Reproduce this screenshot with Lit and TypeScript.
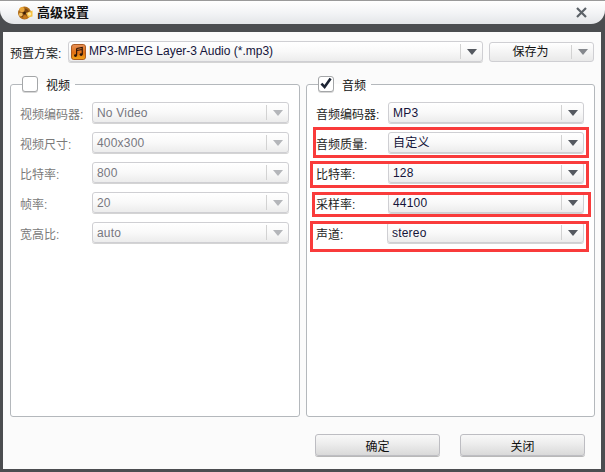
import { LitElement, html, css, svg } from "lit";
import { customElement } from "lit/decorators.js";

const reel = svg`<svg class="logo" width="16" height="16" viewBox="0 0 16 16">
  <circle cx="7.5" cy="8" r="6.5" fill="#b06c18"/>
  <circle cx="7.5" cy="8" r="4.6" fill="#7c4612"/>
  <circle cx="5" cy="4.6" r="2.6" fill="#eaa83c"/>
  <circle cx="3.8" cy="9.4" r="1.9" fill="#f0bc5c"/>
  <circle cx="8" cy="12" r="2" fill="#c77a1e"/>
  <path d="M9 8 L15.5 5.5 L15.5 11.5 L11 12.5 Z" fill="#f6c040"/>
  <circle cx="12.5" cy="9" r="1.8" fill="#fbe7a6"/>
  <circle cx="7.5" cy="8" r="1.3" fill="#3a2008"/>
</svg>`;

const music = svg`<svg class="fmt" width="15" height="16" viewBox="0 0 16 16" preserveAspectRatio="none">
  <defs><linearGradient id="mg" x1="0" y1="0" x2="0" y2="1">
    <stop offset="0" stop-color="#e8925a"/><stop offset="0.55" stop-color="#e07014"/><stop offset="1" stop-color="#f4a818"/>
  </linearGradient></defs>
  <rect x="0.5" y="0.5" width="15" height="15" rx="2.5" fill="url(#mg)" stroke="#a8561c"/>
  <path d="M6 4.5 L12 3.5 L12 10.5 M6 4.5 L6 11.5 M6 6.5 L12 5.5" fill="none" stroke="#2a1408" stroke-width="1.2"/>
  <ellipse cx="4.8" cy="11.6" rx="1.6" ry="1.3" fill="#2a1408"/>
  <ellipse cx="10.8" cy="10.6" rx="1.6" ry="1.3" fill="#2a1408"/>
</svg>`;

const tick = svg`<svg width="16" height="16" viewBox="0 0 16 16">
  <path d="M3.4 7.6 L6.6 11 L12.6 2.6" fill="none" stroke="#1c2433" stroke-width="2.6"/>
</svg>`;

const closeX = svg`<svg width="11" height="11" viewBox="0 0 11 11">
  <path d="M1 1 L10 10 M10 1 L1 10" stroke="#5c6268" stroke-width="2.2" fill="none"/>
</svg>`;

type Row = { label: string; value: string; wide?: boolean };

const videoRows: Row[] = [
  { label: "视频编码器:", value: "No Video" },
  { label: "视频尺寸:", value: "400x300" },
  { label: "比特率:", value: "800" },
  { label: "帧率:", value: "20" },
  { label: "宽高比:", value: "auto" },
];
const audioRows: Row[] = [
  { label: "音频编码器:", value: "MP3" },
  { label: "音频质量:", value: "自定义" },
  { label: "比特率:", value: "128" },
  { label: "采样率:", value: "44100" },
  { label: "声道:", value: "stereo", wide: true },
];

@customElement("app-root")
export class AppRoot extends LitElement {
  static styles = css`
    :host {
      display: block;
      width: 605px;
      height: 472px;
      font-family: "Liberation Sans", "Noto Sans CJK SC", sans-serif;
      font-size: 12px;
      color: #1a1a1a;
    }
    .window {
      position: relative;
      width: 605px;
      height: 472px;
      box-sizing: border-box;
      background: #4b4d50;
      display: flex;
      flex-direction: column;
      overflow: hidden;
    }
    .titlebar {
      height: 24px;
      flex: none;
      box-sizing: border-box;
      border-top: 1px solid #9a9a9a;
      background: linear-gradient(#ffffff, #f2f3f5 55%, #e3e5e8);
      border-radius: 0 0 14px 14px;
      display: flex;
      align-items: center;
      padding: 0 18px 0 17px;
      gap: 4px;
    }
    .title {
      font-size: 13px;
      font-weight: 700;
      color: #111;
      flex: 1;
      line-height: 16px;
      padding-top: 1px;
    }
    .close {
      display: flex;
    }
    .body {
      flex: 1;
      margin: 8px 4px 3px 3px;
      background: #fbfbfb;
      display: flex;
      flex-direction: column;
      padding: 9px 6px 0 7px;
      min-height: 0;
    }
    .preset {
      display: flex;
      align-items: center;
      height: 21px;
    }
    .preset-label {
      width: 58px;
      flex: none;
      color: #222;
      padding-top: 2px;
    }
    .preset .select {
      width: 415px;
      flex: none;
    }
    .preset .select .value {
      padding: 0 0 0 2px;
      letter-spacing: 0;
      gap: 3px;
    }
    .select {
      box-sizing: border-box;
      height: 21px;
      border: 1px solid #cfcfd3;
      border-radius: 3px;
      background: linear-gradient(#ffffff, #f9f9f9 50%, #ececec);
      box-shadow: 0 1px 0 #d4d4d4;
      display: flex;
      align-items: stretch;
      min-width: 0;
    }
    .select .value {
      flex: 1;
      padding: 2px 0 0 4px;
      display: flex;
      align-items: center;
      gap: 3px;
      color: #14143a;
      line-height: 17px;
      letter-spacing: 0.2px;
      white-space: nowrap;
    }
    .select .caret {
      width: 21px;
      flex: none;
      margin: 2px 0;
      border-left: 1px solid #d2d2d2;
      display: flex;
      align-items: center;
      justify-content: center;
    }
    .arrow {
      width: 0;
      height: 0;
      border-left: 5px solid transparent;
      border-right: 5px solid transparent;
      border-top: 6px solid #555960;
    }
    .off .arrow {
      border-top-color: #b4b6ba;
    }
    .off .select .value {
      color: #77777f;
    }
    .off .field-label {
      color: #7a7a7a;
    }
    .save {
      margin-left: 6px;
      width: 105px;
      height: 20px;
      box-sizing: border-box;
      border: 1px solid #cfcfd3;
      border-radius: 3px;
      background: linear-gradient(#ffffff, #f4f4f4 50%, #e9e9e9);
      display: flex;
      align-items: stretch;
    }
    .save .text {
      flex: 1;
      text-align: center;
      line-height: 18px;
      color: #111;
    }
    .save .caret {
      width: 21px;
      flex: none;
      margin: 2px 0;
      border-left: 1px solid #d2d2d2;
      display: flex;
      align-items: center;
      justify-content: center;
    }
    .save .arrow {
      border-top-color: #85888d;
    }
    .panels {
      display: grid;
      grid-template-columns: 290px 289px;
      gap: 6px;
      margin-top: 14px;
    }
    fieldset {
      margin: 0;
      min-width: 0;
      height: 341px;
      box-sizing: border-box;
      border: 1px solid #b4b8bc;
      border-radius: 3px;
      padding: 10px 10px 0 9px;
      background: #ffffff;
    }
    legend {
      margin-left: 2px;
      padding: 0 5px 0 0;
      display: flex;
      align-items: center;
      gap: 8px;
      height: 16px;
      color: #111;
      font-size: 12px;
    }
    .check {
      width: 16px;
      height: 16px;
      box-sizing: border-box;
      border: 1px solid #a4a6a8;
      border-radius: 3px;
      background: #fff;
      box-shadow: 0 1px 0 #d8d8d8;
      display: flex;
    }
    .check svg {
      margin: -1px;
    }
    .form {
      display: grid;
      grid-template-columns: 72px 1fr;
      row-gap: 9px;
      align-items: center;
    }
    .field-label {
      color: #222;
      white-space: nowrap;
      padding-top: 1px;
    }
    .wide {
      margin-left: -1px;
    }
    .footer {
      display: flex;
      gap: 20px;
      padding-left: 305px;
      margin-top: 17px;
    }
    .btn {
      width: 125px;
      height: 22px;
      box-sizing: border-box;
      border: 1px solid #bdbdc2;
      border-radius: 3px;
      background: linear-gradient(#f8f8f8, #eeeeee 40%, #d9d9d9);
      box-shadow: 0 1px 0 #b8b8b8;
      text-align: center;
      line-height: 20px;
      padding-top: 2px;
      color: #111;
    }
    .mark {
      position: absolute;
      box-sizing: border-box;
      border: 3px solid #f93b3b;
      pointer-events: none;
    }
    .m1 { left: 313px; top: 127px; width: 276px; height: 31px; }
    .m2 { left: 310px; top: 161px; width: 279px; height: 27px; }
    .m3 { left: 312px; top: 192px; width: 279px; height: 25px; }
    .m4 { left: 310px; top: 221px; width: 279px; height: 31px; }
  `;

  private select(value: unknown, wide = false) {
    return html`<div class="select ${wide ? "wide" : ""}">
      <div class="value">${value}</div>
      <div class="caret"><span class="arrow"></span></div>
    </div>`;
  }

  private rows(rows: Row[]) {
    return html`<div class="form">
      ${rows.map(
        (r) => html`<div class="field-label">${r.label}</div>
          ${this.select(r.value, r.wide)}`
      )}
    </div>`;
  }

  render() {
    return html`<div class="window">
      <div class="titlebar">
        ${reel}
        <div class="title">高级设置</div>
        <div class="close">${closeX}</div>
      </div>
      <div class="body">
        <div class="preset">
          <div class="preset-label">预置方案:</div>
          ${this.select(html`${music}<span>MP3-MPEG Layer-3 Audio (*.mp3)</span>`)}
          <div class="save">
            <div class="text">保存为</div>
            <div class="caret"><span class="arrow"></span></div>
          </div>
        </div>
        <div class="panels">
          <fieldset class="off">
            <legend><span class="check"></span><span>视频</span></legend>
            ${this.rows(videoRows)}
          </fieldset>
          <fieldset>
            <legend><span class="check">${tick}</span><span>音频</span></legend>
            ${this.rows(audioRows)}
          </fieldset>
        </div>
        <div class="footer">
          <div class="btn">确定</div>
          <div class="btn">关闭</div>
        </div>
      </div>
      <div class="mark m1"></div>
      <div class="mark m2"></div>
      <div class="mark m3"></div>
      <div class="mark m4"></div>
    </div>`;
  }
}
